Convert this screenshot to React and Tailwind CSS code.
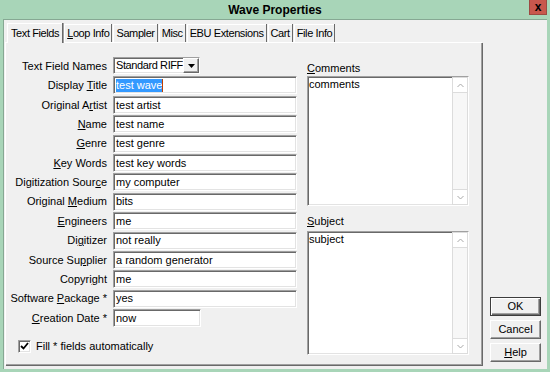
import React from "react";

const font = { fontFamily: '"Liberation Sans", Arial, sans-serif' };

const tabs = [
  { label: "Text Fields", active: true },
  { label: "Loop Info", u: 0 },
  { label: "Sampler" },
  { label: "Misc" },
  { label: "EBU Extensions" },
  { label: "Cart" },
  { label: "File Info" },
];

const fields = [
  { label: "Display Title", u: 8, value: "test wave", selected: true },
  { label: "Original Artist", u: 10, value: "test artist" },
  { label: "Name", u: 0, value: "test name" },
  { label: "Genre", u: 0, value: "test genre" },
  { label: "Key Words", u: 0, value: "test key words" },
  { label: "Digitization Source", u: 17, value: "my computer" },
  { label: "Original Medium", u: 9, value: "bits" },
  { label: "Engineers", u: 0, value: "me" },
  { label: "Digitizer", u: 2, value: "not really" },
  { label: "Source Supplier", u: 9, value: "a random generator" },
  { label: "Copyright", u: 6, value: "me" },
  { label: "Software Package *", u: 9, value: "yes" },
  { label: "Creation Date *", u: 0, value: "now", short: true },
];

// label with one underlined mnemonic letter
const Mnemonic = ({ text, u }) => {
  if (u === undefined) return <>{text}</>;
  return (
    <>
      {text.slice(0, u)}
      <span className="underline underline-offset-[1px]">{text[u]}</span>
      {text.slice(u + 1)}
    </>
  );
};

const sunken =
  "border border-[#a0a0a0] border-b-white border-r-white shadow-[inset_1px_1px_0_#696969,inset_-1px_-1px_0_#e3e3e3]";

const raised =
  "border border-white border-b-[#696969] border-r-[#696969] shadow-[inset_-1px_-1px_0_#a0a0a0]";

const Chevron = ({ up }) => (
  <svg width="7" height="5" viewBox="0 0 7 5">
    <polyline
      points={up ? "0.5,4 3.5,1 6.5,4" : "0.5,1 3.5,4 6.5,1"}
      fill="none"
      stroke="#a8a8a8"
      strokeWidth="1"
    />
  </svg>
);

const MemoBox = ({ text, height }) => (
  <div className={`flex w-[162px] bg-white ${sunken}`} style={{ height }}>
    <div className="flex-1 pl-[1px] pt-[1px] text-[11px] leading-[13px]">{text}</div>
    <div className="flex w-[16px] flex-col border border-[#dcdcdc] bg-[#f7f7f7]">
      <div className="flex h-[15px] items-center justify-center border-b border-[#dcdcdc] bg-white">
        <Chevron up />
      </div>
      <div className="flex-1" />
      <div className="flex h-[15px] items-center justify-center border-t border-[#dcdcdc] bg-white">
        <Chevron />
      </div>
    </div>
  </div>
);

const DlgButton = ({ children, isDefault }) => (
  <div
    className={`flex h-[19px] w-[51px] items-center justify-center bg-[#f0f0f0] text-[11px] ${
      isDefault
        ? "border border-[#3c3c3c] shadow-[inset_1px_1px_0_#fff,inset_-1px_-1px_0_#696969,inset_-2px_-2px_0_#a0a0a0]"
        : raised
    }`}
  >
    {children}
  </div>
);

export default function App() {
  return (
    <div className="flex h-[372px] w-[550px] flex-col bg-[#a8d5b8] text-black" style={font}>
      {/* Title bar */}
      <div className="relative flex h-[19px] items-center justify-center">
        <span className="text-[12px] font-bold">Wave Properties</span>
        <div className="absolute right-[3px] top-0 flex h-[15px] w-[18px] items-center justify-center bg-[#c8574d] border border-t-0 border-[#9c4a42] text-[12px] font-bold leading-none">
          x
        </div>
      </div>

      {/* Client */}
      <div className="mx-[3px] mb-[3px] flex flex-1 border-l border-t border-[#86a893] bg-[#f0f0f0]">
        <div className="ml-[1px] mt-[3px] flex flex-col">
          {/* Tabs */}
          <div className="flex h-[19px] items-end pl-[2px] tracking-[-0.4px]">
            {tabs.map((t) =>
              t.active ? (
                <div
                  key={t.label}
                  className="relative z-10 -mb-[1px] flex h-[20px] items-center border-l border-t border-white bg-[#f0f0f0] px-[3px] text-[11px] shadow-[1px_0_0_#696969,2px_0_0_#a0a0a0]"
                >
                  {t.label}
                </div>
              ) : (
                <div
                  key={t.label}
                  className="ml-[2px] flex h-[18px] items-center border-l border-t border-white px-[2px] text-[11px] shadow-[1px_0_0_#696969]"
                >
                  <Mnemonic text={t.label} u={t.u} />
                </div>
              )
            )}
          </div>

          {/* Tab panel */}
          <div className="flex h-[323px] w-[477px] border-l border-t border-white shadow-[inset_-1px_-1px_0_#a0a0a0,1px_1px_0_#696969]">
            <div className="flex w-[297px] flex-col pt-[14px]">
              <div className="grid grid-cols-[101px_186px] items-center gap-x-[6px] gap-y-[1.4px]">
                <div className="text-right text-[11px]">Text Field Names</div>
                <div className={`mb-[1px] flex h-[17px] w-[87px] bg-white ${sunken}`}>
                  <div className="flex-1 overflow-hidden whitespace-nowrap pl-[2px] text-[11px] leading-[14px] tracking-[-0.4px]">
                    Standard RIFF
                  </div>
                  <div className={`flex w-[16px] items-center justify-center bg-[#f0f0f0] ${raised}`}>
                    <svg width="7" height="4" viewBox="0 0 7 4">
                      <polygon points="0,0 7,0 3.5,4" fill="#000" />
                    </svg>
                  </div>
                </div>
                {fields.map((f) => (
                  <React.Fragment key={f.label}>
                    <div className="whitespace-nowrap text-right text-[11px]">
                      <Mnemonic text={f.label} u={f.u} />
                    </div>
                    <div
                      className={`flex h-[18px] items-center bg-white pl-[2px] text-[11px] ${sunken} ${
                        f.short ? "w-[88px]" : "w-[184px]"
                      }`}
                    >
                      {f.selected ? (
                        <>
                          <span className="bg-[#3399ff] text-white leading-[13px]">{f.value}</span>
                          <span className="h-[13px] w-[1px] bg-[#c04000]" />
                        </>
                      ) : (
                        f.value
                      )}
                    </div>
                  </React.Fragment>
                ))}
              </div>

              <div className="ml-[12px] mt-[11px] flex items-center gap-[5px] text-[11px]">
                <div className={`flex h-[13px] w-[13px] items-center justify-center bg-white ${sunken}`}>
                  <svg width="9" height="8" viewBox="0 0 9 8">
                    <polyline points="1,4 3.5,6.5 8,1" fill="none" stroke="#000" strokeWidth="1.8" />
                  </svg>
                </div>
                <span>Fill * fields automatically</span>
              </div>
            </div>

            <div className="ml-[4px] mt-[18px] flex flex-col text-[11px]">
              <div className="h-[14px] leading-[14px]">
                <Mnemonic text="Comments" u={0} />
              </div>
              <div className="mt-[1px]">
                <MemoBox text="comments" height={130} />
              </div>
              <div className="mt-[8px] h-[14px] leading-[14px]">
                <Mnemonic text="Subject" u={0} />
              </div>
              <div className="mt-[3px]">
                <MemoBox text="subject" height={124} />
              </div>
            </div>
          </div>
        </div>

        {/* Buttons */}
        <div className="ml-[8px] flex flex-col justify-end gap-[4px] pb-[7px]">
          <DlgButton isDefault>OK</DlgButton>
          <DlgButton>Cancel</DlgButton>
          <DlgButton>
            <Mnemonic text="Help" u={0} />
          </DlgButton>
        </div>
      </div>
    </div>
  );
}
